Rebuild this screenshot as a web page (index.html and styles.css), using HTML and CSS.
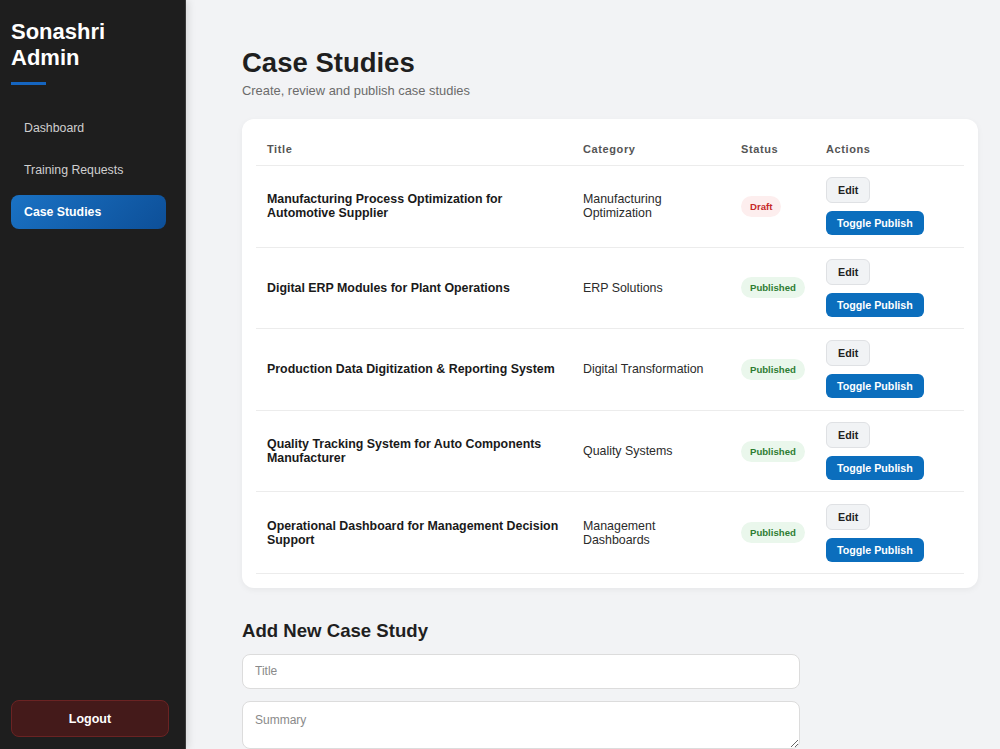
FILE: index.html
```html
<!DOCTYPE html>
<html lang="en">
<head>
    <meta charset="UTF-8">
    <meta name="viewport" content="width=device-width, initial-scale=1.0">
    <title>Sonashri Admin - Case Studies</title>
    <link rel="stylesheet" href="styles.css">
</head>
<body>
    <aside class="sidebar">
        <div class="brand">
            <h1>Sonashri Admin</h1>
            <div class="brand-line"></div>
        </div>
        <nav class="nav">
            <a href="#" class="nav-item">Dashboard</a>
            <a href="#" class="nav-item">Training Requests</a>
            <a href="#" class="nav-item active">Case Studies</a>
        </nav>
        <button class="logout">Logout</button>
    </aside>

    <main class="main">
        <h2 class="page-title">Case Studies</h2>
        <p class="page-sub">Create, review and publish case studies</p>

        <div class="card">
            <table class="cs-table">
                <colgroup>
                    <col class="c-title">
                    <col class="c-cat">
                    <col class="c-status">
                    <col class="c-actions">
                </colgroup>
                <thead>
                    <tr>
                        <th>Title</th>
                        <th>Category</th>
                        <th>Status</th>
                        <th>Actions</th>
                    </tr>
                </thead>
                <tbody>
                    <tr>
                        <td class="t-title">Manufacturing Process Optimization for Automotive Supplier</td>
                        <td>Manufacturing Optimization</td>
                        <td><span class="badge draft">Draft</span></td>
                        <td class="actions"><button class="btn-edit">Edit</button><button class="btn-toggle">Toggle Publish</button></td>
                    </tr>
                    <tr>
                        <td class="t-title">Digital ERP Modules for Plant Operations</td>
                        <td>ERP Solutions</td>
                        <td><span class="badge published">Published</span></td>
                        <td class="actions"><button class="btn-edit">Edit</button><button class="btn-toggle">Toggle Publish</button></td>
                    </tr>
                    <tr>
                        <td class="t-title">Production Data Digitization &amp; Reporting System</td>
                        <td>Digital Transformation</td>
                        <td><span class="badge published">Published</span></td>
                        <td class="actions"><button class="btn-edit">Edit</button><button class="btn-toggle">Toggle Publish</button></td>
                    </tr>
                    <tr>
                        <td class="t-title">Quality Tracking System for Auto Components Manufacturer</td>
                        <td>Quality Systems</td>
                        <td><span class="badge published">Published</span></td>
                        <td class="actions"><button class="btn-edit">Edit</button><button class="btn-toggle">Toggle Publish</button></td>
                    </tr>
                    <tr>
                        <td class="t-title">Operational Dashboard for Management Decision Support</td>
                        <td>Management Dashboards</td>
                        <td><span class="badge published">Published</span></td>
                        <td class="actions"><button class="btn-edit">Edit</button><button class="btn-toggle">Toggle Publish</button></td>
                    </tr>
                </tbody>
            </table>
        </div>

        <h3 class="form-title">Add New Case Study</h3>
        <form class="cs-form">
            <input type="text" placeholder="Title">
            <textarea placeholder="Summary"></textarea>
        </form>
    </main>
</body>
</html>
```

FILE: styles.css
```css
* {
    box-sizing: border-box;
}
html, body {
    height: 100%;
}
body {
    margin: 0;
    font-family: "Liberation Sans", Arial, sans-serif;
    background-color: #f2f3f5;
    color: #1f1f1f;
    display: flex;
    overflow: hidden;
}

/* sidebar */
.sidebar {
    width: 186px;
    flex-shrink: 0;
    height: 100vh;
    background: #1e1e1e;
    padding: 19px 11px 12px 11px;
    display: flex;
    flex-direction: column;
    box-shadow: 2px 0 8px rgba(0, 0, 0, 0.12);
    border-right: 1px solid #3a3a3a;
    position: relative;
    z-index: 1;
}
.brand h1 {
    margin: 0;
    color: #fff;
    font-size: 22px;
    line-height: 26px;
    font-weight: bold;
}
.brand-line {
    width: 35px;
    height: 3px;
    background: #1565c0;
    margin-top: 11px;
}
.nav {
    margin-top: 26px;
    display: flex;
    flex-direction: column;
    gap: 8px;
    margin-right: 8px;
}
.nav-item {
    display: block;
    height: 34px;
    line-height: 34px;
    padding: 0 13px;
    color: #cfcfcf;
    text-decoration: none;
    font-size: 12.3px;
    border-radius: 8px;
}
.nav-item.active {
    background: linear-gradient(135deg, #1a72c4, #0d4f98);
    color: #fff;
    font-weight: bold;
}
.logout {
    margin-top: auto;
    height: 37px;
    width: 158px;
    background: #441a1a;
    border: 1px solid #6b2323;
    border-radius: 8px;
    color: #fff;
    font-family: inherit;
    font-size: 12.5px;
    font-weight: bold;
    cursor: pointer;
}

/* main */
.main {
    flex: 1;
    padding: 47px 22px 0 56px;
    overflow: hidden;
}
.page-title {
    margin: 0;
    font-size: 27.5px;
    line-height: 32px;
    font-weight: bold;
    color: #1f1f1f;
}
.page-sub {
    margin: 4px 0 0 0;
    font-size: 12.9px;
    line-height: 16px;
    color: #6b6b6b;
}
.card {
    margin-top: 20px;
    background: #fff;
    border-radius: 12px;
    padding: 14px;
    box-shadow: 0 2px 6px rgba(0, 0, 0, 0.05);
}
.cs-table {
    width: 100%;
    border-collapse: collapse;
    table-layout: fixed;
}
.c-title { width: 316px; }
.c-cat { width: 158px; }
.c-status { width: 85px; }
.cs-table th {
    text-align: left;
    font-size: 11px;
    line-height: 12px;
    font-weight: bold;
    color: #555;
    letter-spacing: 0.6px;
    padding: 10px 11px;
    border-bottom: 1px solid #ececec;
}
.cs-table td {
    padding: 11px 11px;
    height: 81.6px;
    font-size: 12.4px;
    line-height: 14px;
    color: #2b2b2b;
    border-bottom: 1px solid #ececec;
    vertical-align: middle;
}
.cs-table td.t-title {
    font-weight: bold;
    color: #1a1a1a;
}
.badge {
    display: inline-block;
    padding: 5px 9px;
    font-size: 9.6px;
    line-height: 11px;
    font-weight: bold;
    border-radius: 12px;
}
.badge.draft {
    background: #fdeeee;
    color: #c62828;
}
.badge.published {
    background: #eaf7ec;
    color: #2e7d32;
}
.actions button {
    display: block;
    font-family: inherit;
    font-size: 10.7px;
    font-weight: bold;
    border-radius: 6px;
    cursor: pointer;
}
.btn-edit {
    height: 26px;
    padding: 0 11px;
    background: #f1f3f5;
    border: 1px solid #dfe1e4;
    color: #222;
}
.btn-toggle {
    margin-top: 8px;
    height: 24px;
    padding: 0 11px;
    background: #0b6ebd;
    border: none;
    color: #fff;
}

/* form */
.form-title {
    margin: 32px 0 0 0;
    font-size: 18.6px;
    line-height: 22px;
    font-weight: bold;
    color: #1f1f1f;
}
.cs-form {
    margin-top: 12px;
    width: 558px;
    display: flex;
    flex-direction: column;
    gap: 12px;
}
.cs-form input,
.cs-form textarea {
    width: 100%;
    border: 1px solid #dcdcdc;
    border-radius: 8px;
    background: #fff;
    font-family: inherit;
    font-size: 12px;
    padding: 0 12px;
    color: #333;
}
.cs-form input {
    height: 35px;
}
.cs-form textarea {
    height: 48px;
    padding-top: 11px;
    resize: vertical;
}
.cs-form ::placeholder {
    color: #8a8a8a;
}
```
